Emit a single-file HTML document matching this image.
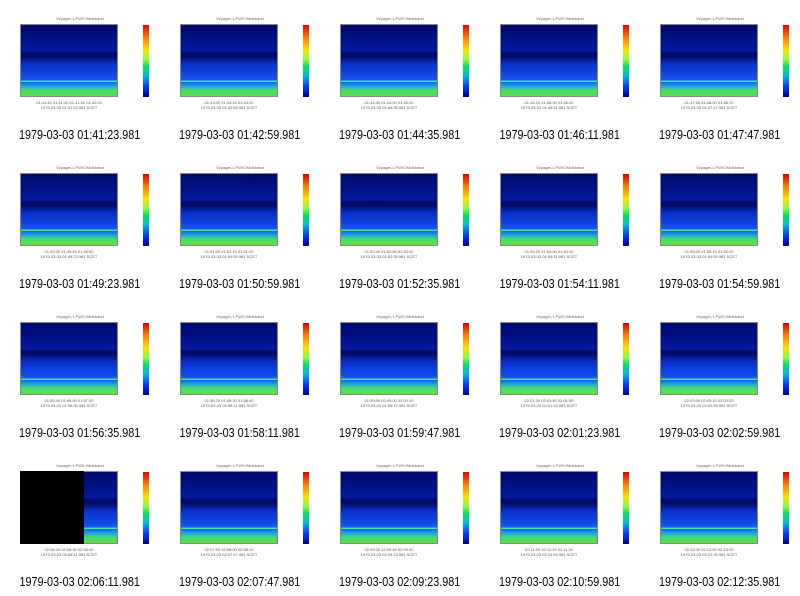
<!DOCTYPE html>
<html><head><meta charset="utf-8"><style>
body{margin:0;width:800px;height:596px;background:#fff;position:relative;overflow:hidden;font-family:"Liberation Sans",sans-serif}
.c{position:absolute;width:160px;height:149px}
.t{position:absolute;left:0;width:160px;top:16px;text-align:center;font-size:4px;color:#666}
.p{position:absolute;left:20px;top:24px;width:98px;height:73px;background:linear-gradient(#000a6e 0%,#00138c 25%,#001aa0 36%,#000a60 40%,#000c68 44%,#0a30c8 55%,#1448e8 72%,#1a58f0 78%,#40e8a0 78.5%,#40e8a0 80%,#1a60e8 80.5%,#20a0e0 86%,#40d880 91%,#60e040 100%);border:1px solid #888;box-sizing:border-box}
.cb{position:absolute;left:143px;top:25px;width:6px;height:72px;background:linear-gradient(#e00000,#ff8000 18%,#ffe000 35%,#80ff40 48%,#00e060 58%,#00c0e0 70%,#0040ff 85%,#000090)}
.ax{position:absolute;left:20px;top:100px;width:98px;font-size:4px;color:#555;text-align:center;line-height:5px}
.cap{position:absolute;left:-20px;width:200px;top:127px;text-align:center;font-size:13px;color:#000;transform:scaleX(0.83);transform-origin:98px 0}
.k{position:absolute;left:20px;top:24px;width:64px;height:73px;background:#000}
</style></head><body>
<div class="c" style="left:0;top:0"><div class="t">Voyager-1 PWS Wideband</div><div class="p"></div><div class="cb"></div><div class="ax">01:41:30 01:41:40 01:41:50 01:42:00<br>1979-03-03 01:41:23.981 SCET</div><div class="cap">1979-03-03 01:41:23.981</div></div>
<div class="c" style="left:160px;top:0"><div class="t">Voyager-1 PWS Wideband</div><div class="p"></div><div class="cb"></div><div class="ax">01:43:00 01:43:10 01:43:20<br>1979-03-03 01:42:59.981 SCET</div><div class="cap">1979-03-03 01:42:59.981</div></div>
<div class="c" style="left:320px;top:0"><div class="t">Voyager-1 PWS Wideband</div><div class="p"></div><div class="cb"></div><div class="ax">01:44:40 01:44:50 01:45:00<br>1979-03-03 01:44:35.981 SCET</div><div class="cap">1979-03-03 01:44:35.981</div></div>
<div class="c" style="left:480px;top:0"><div class="t">Voyager-1 PWS Wideband</div><div class="p"></div><div class="cb"></div><div class="ax">01:46:20 01:46:30 01:46:40<br>1979-03-03 01:46:11.981 SCET</div><div class="cap">1979-03-03 01:46:11.981</div></div>
<div class="c" style="left:640px;top:0"><div class="t">Voyager-1 PWS Wideband</div><div class="p"></div><div class="cb"></div><div class="ax">01:47:50 01:48:00 01:48:10<br>1979-03-03 01:47:47.981 SCET</div><div class="cap">1979-03-03 01:47:47.981</div></div>

<div class="c" style="left:0;top:149px"><div class="t">Voyager-1 PWS Wideband</div><div class="p"></div><div class="cb"></div><div class="ax">01:49:30 01:49:40 01:49:50<br>1979-03-03 01:49:23.981 SCET</div><div class="cap">1979-03-03 01:49:23.981</div></div>
<div class="c" style="left:160px;top:149px"><div class="t">Voyager-1 PWS Wideband</div><div class="p"></div><div class="cb"></div><div class="ax">01:51:00 01:51:10 01:51:20<br>1979-03-03 01:50:59.981 SCET</div><div class="cap">1979-03-03 01:50:59.981</div></div>
<div class="c" style="left:320px;top:149px"><div class="t">Voyager-1 PWS Wideband</div><div class="p"></div><div class="cb"></div><div class="ax">01:52:40 01:52:50 01:53:00<br>1979-03-03 01:52:35.981 SCET</div><div class="cap">1979-03-03 01:52:35.981</div></div>
<div class="c" style="left:480px;top:149px"><div class="t">Voyager-1 PWS Wideband</div><div class="p"></div><div class="cb"></div><div class="ax">01:54:20 01:54:30 01:54:40<br>1979-03-03 01:54:11.981 SCET</div><div class="cap">1979-03-03 01:54:11.981</div></div>
<div class="c" style="left:640px;top:149px"><div class="t">Voyager-1 PWS Wideband</div><div class="p"></div><div class="cb"></div><div class="ax">01:55:00 01:55:10 01:55:20<br>1979-03-03 01:54:59.981 SCET</div><div class="cap">1979-03-03 01:54:59.981</div></div>

<div class="c" style="left:0;top:298px"><div class="t">Voyager-1 PWS Wideband</div><div class="p"></div><div class="cb"></div><div class="ax">01:56:40 01:56:50 01:57:00<br>1979-03-03 01:56:35.981 SCET</div><div class="cap">1979-03-03 01:56:35.981</div></div>
<div class="c" style="left:160px;top:298px"><div class="t">Voyager-1 PWS Wideband</div><div class="p"></div><div class="cb"></div><div class="ax">01:58:20 01:58:30 01:58:40<br>1979-03-03 01:58:11.981 SCET</div><div class="cap">1979-03-03 01:58:11.981</div></div>
<div class="c" style="left:320px;top:298px"><div class="t">Voyager-1 PWS Wideband</div><div class="p"></div><div class="cb"></div><div class="ax">01:59:50 02:00:00 02:00:10<br>1979-03-03 01:59:47.981 SCET</div><div class="cap">1979-03-03 01:59:47.981</div></div>
<div class="c" style="left:480px;top:298px"><div class="t">Voyager-1 PWS Wideband</div><div class="p"></div><div class="cb"></div><div class="ax">02:01:30 02:01:40 02:01:50<br>1979-03-03 02:01:23.981 SCET</div><div class="cap">1979-03-03 02:01:23.981</div></div>
<div class="c" style="left:640px;top:298px"><div class="t">Voyager-1 PWS Wideband</div><div class="p"></div><div class="cb"></div><div class="ax">02:03:00 02:03:10 02:03:20<br>1979-03-03 02:02:59.981 SCET</div><div class="cap">1979-03-03 02:02:59.981</div></div>

<div class="c" style="left:0;top:447px"><div class="t">Voyager-1 PWS Wideband</div><div class="p"></div><div class="k"></div><div class="cb"></div><div class="ax">02:06:20 02:06:30 02:06:40<br>1979-03-03 02:06:11.981 SCET</div><div class="cap">1979-03-03 02:06:11.981</div></div>
<div class="c" style="left:160px;top:447px"><div class="t">Voyager-1 PWS Wideband</div><div class="p"></div><div class="cb"></div><div class="ax">02:07:50 02:08:00 02:08:10<br>1979-03-03 02:07:47.981 SCET</div><div class="cap">1979-03-03 02:07:47.981</div></div>
<div class="c" style="left:320px;top:447px"><div class="t">Voyager-1 PWS Wideband</div><div class="p"></div><div class="cb"></div><div class="ax">02:09:30 02:09:40 02:09:50<br>1979-03-03 02:09:23.981 SCET</div><div class="cap">1979-03-03 02:09:23.981</div></div>
<div class="c" style="left:480px;top:447px"><div class="t">Voyager-1 PWS Wideband</div><div class="p"></div><div class="cb"></div><div class="ax">02:11:00 02:11:10 02:11:20<br>1979-03-03 02:10:59.981 SCET</div><div class="cap">1979-03-03 02:10:59.981</div></div>
<div class="c" style="left:640px;top:447px"><div class="t">Voyager-1 PWS Wideband</div><div class="p"></div><div class="cb"></div><div class="ax">02:12:40 02:12:50 02:13:00<br>1979-03-03 02:12:35.981 SCET</div><div class="cap">1979-03-03 02:12:35.981</div></div>
</body></html>
